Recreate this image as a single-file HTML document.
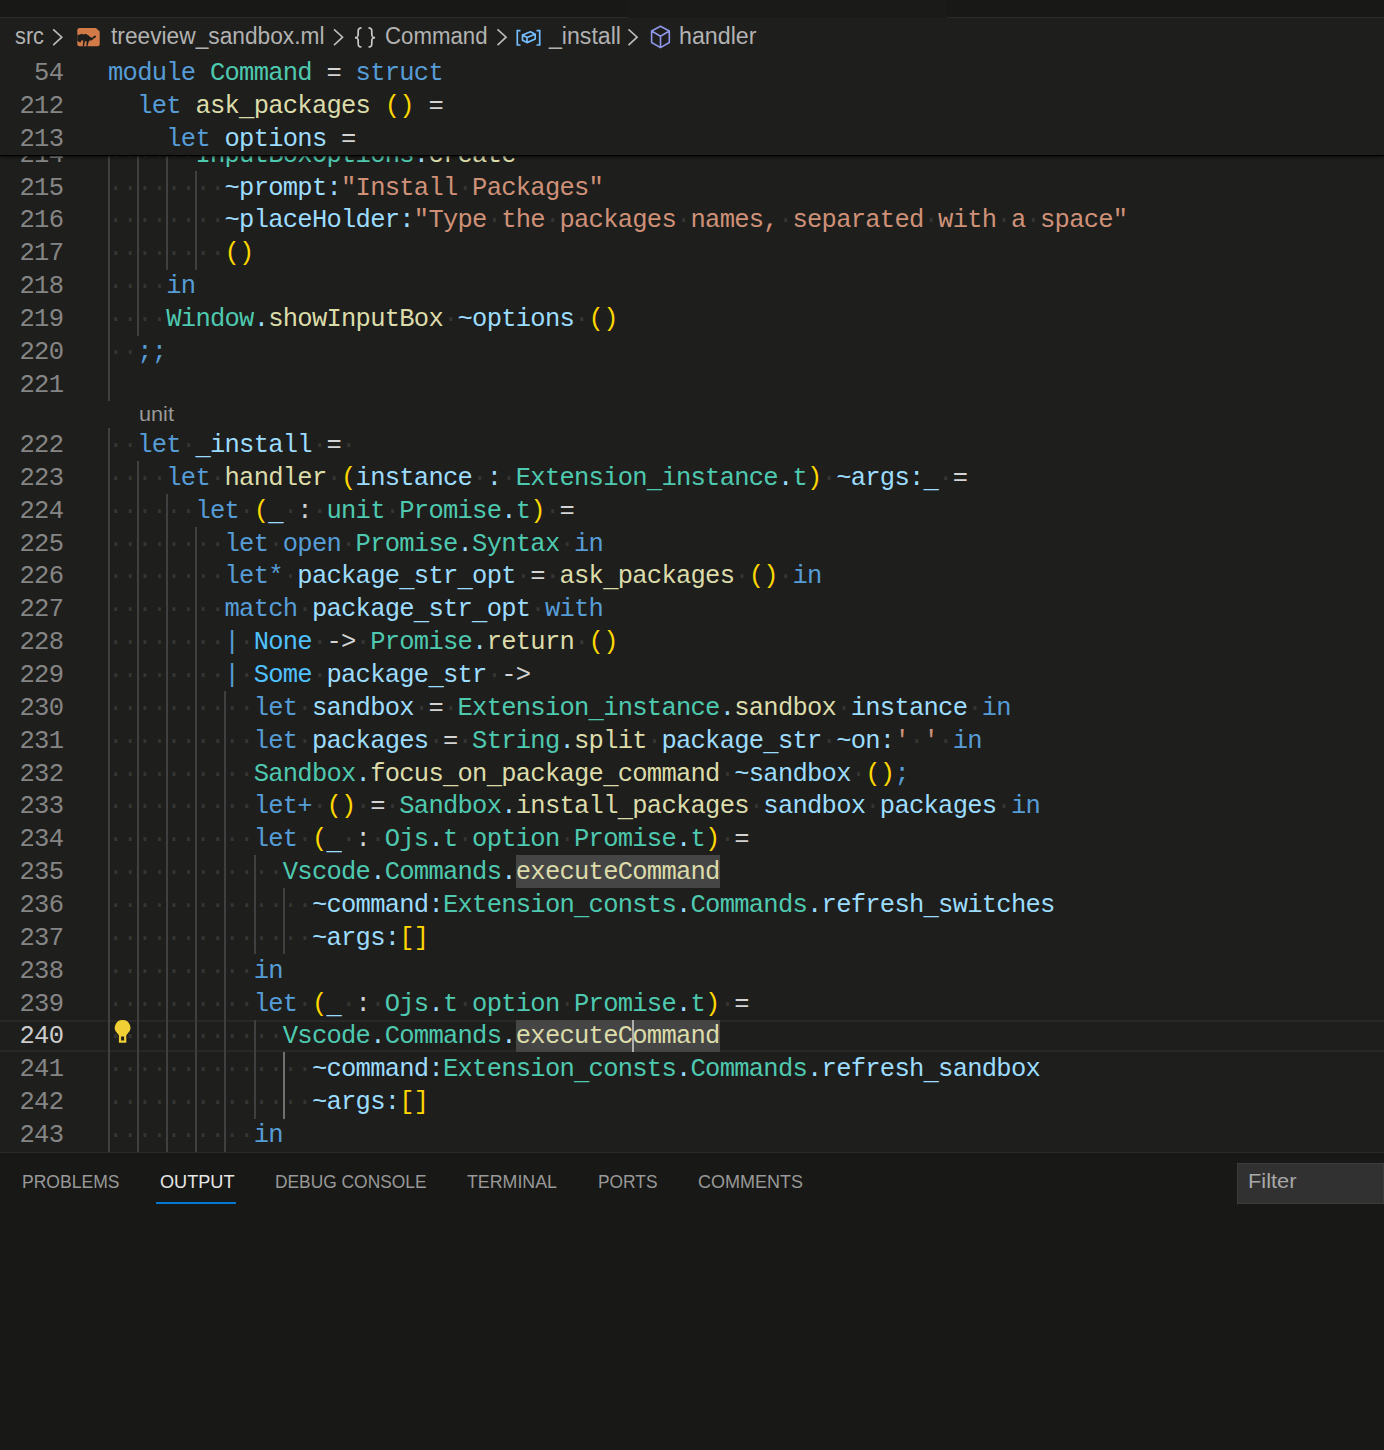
<!DOCTYPE html>
<html><head><meta charset="utf-8"><style>
*{margin:0;padding:0;box-sizing:border-box}
html,body{width:1384px;height:1450px;overflow:hidden;background:#181816}
body{position:relative;font-family:"Liberation Mono",monospace}
#tabs{position:absolute;left:0;top:0;width:1384px;height:17px;background:#181816}
#tabs:after{content:"";position:absolute;left:0;top:17px;width:1384px;height:1px;background:#2b2b2b}
#editor{position:absolute;left:0;top:18px;width:1384px;height:1134px;background:#1e1e1c;overflow:hidden}
#crumbs{position:absolute;left:0;top:18px;width:1384px;height:39px;font-family:"Liberation Sans",sans-serif;font-size:23.5px;color:#a9a9a9}
#crumbs span{position:absolute;top:-1.5px;line-height:39px;white-space:pre;color:#b2b2b2}
.line{position:absolute;left:108.0px;margin-top:1.8px;height:32.857px;line-height:32.857px;font-size:25.5px;letter-spacing:-0.74px;white-space:pre;color:#d4d4d4}
.num{position:absolute;left:0;margin-top:1.8px;width:63.2px;text-align:right;height:32.857px;line-height:32.857px;font-size:25.5px;letter-spacing:-0.74px;color:#858585}
.num.act{color:#cccccc}
i{font-style:normal;color:rgba(227,228,226,0.12)}
.k{color:#569cd6} .v{color:#9cdcfe} .f{color:#dcdcaa} .m{color:#4ec9b0} .s{color:#ce9178} .o{color:#d4d4d4} .b{color:#ffd700} .c{color:#4fc1ff} .d{color:#9cdcfe} u{text-decoration:none;position:relative;top:2.5px}
#sticky .line,#sticky .num{margin-top:0.8px}
.g{position:absolute;width:2px;height:33.357px;background:#404040}
.g.ga{background:#707070}
#sticky{position:absolute;left:0;top:57px;width:1384px;height:98.4px;background:#1e1e1c;box-shadow:0 1px 0 #000,0 2px 3px rgba(0,0,0,0.7)}
#panel{position:absolute;left:0;top:1152px;width:1384px;height:298px;background:#181816;border-top:1px solid #2b2b2b;font-family:"Liberation Sans",sans-serif}
.pt{position:absolute;top:17.5px;font-size:18.6px;line-height:22px;color:#999999}
.pt.on{color:#e7e7e7}
</style></head><body>
<div id="tabs"></div><div style="position:absolute;left:628px;top:0;width:319px;height:18px;background:#1a1a18"></div>
<div id="editor"></div>

<div id="crumbs"><span style="left:14.5px;transform:scaleX(0.9258);transform-origin:0 0;">src</span><span style="left:111.0px;transform:scaleX(0.9672);transform-origin:0 0;">treeview_sandbox.ml</span><span style="left:384.5px;transform:scaleX(0.9455);transform-origin:0 0;">Command</span><span style="left:549.0px;transform:scaleX(0.9842);transform-origin:0 0;">_install</span><span style="left:679.0px;transform:scaleX(0.9886);transform-origin:0 0;">handler</span></div>
<svg style="position:absolute;left:0;top:0" width="1384" height="60" viewBox="0 0 1384 60"><polyline points="53.2,29.3 61.8,37.2 53.2,45.1" fill="none" stroke="#bdbdbd" stroke-width="1.6"/><polyline points="334.0,29.3 342.6,37.2 334.0,45.1" fill="none" stroke="#bdbdbd" stroke-width="1.6"/><polyline points="497.5,29.3 506.1,37.2 497.5,45.1" fill="none" stroke="#bdbdbd" stroke-width="1.6"/><polyline points="628.5,29.3 637.1,37.2 628.5,45.1" fill="none" stroke="#bdbdbd" stroke-width="1.6"/><path d="M361.5,27.8 C357.5,27.8 358.2,31 358.2,34 C358.2,36.5 357.8,37.4 355,37.6 C357.8,37.8 358.2,38.7 358.2,41.2 C358.2,44.2 357.5,47 361.5,47" fill="none" stroke="#cccccc" stroke-width="1.7"/><path d="M368.5,27.8 C372.5,27.8 371.8,31 371.8,34 C371.8,36.5 372.2,37.4 375,37.6 C372.2,37.8 371.8,38.7 371.8,41.2 C371.8,44.2 372.5,47 368.5,47" fill="none" stroke="#cccccc" stroke-width="1.7"/><path d="M79.5,28 H96 L99.7,31.5 V44.2 Q99.7,46.3 97.6,46.3 H79.5 Q77.3,46.3 77.3,44.2 V30.2 Q77.3,28 79.5,28 Z" fill="#d27a48"/><path d="M77.3,35 L80,34.6 L81.5,33.8 L83.5,34.5 L85.5,33.8 L88,35 L90.5,37.3 L92.5,37.8 L93.5,36.3 L95.5,35.6 L96.2,37 L93.8,38.5 L91.5,40.5 L89.5,40.6 L88.6,42 L87.6,46.3 L86.4,46.3 L86.6,41.6 L85,41 L84,46.3 L82.8,46.3 L83.2,40.5 L81.5,40.2 L80.5,42.5 L77.3,41 Z" fill="#1e1e1c"/><path d="M520.5,30.6 H517.3 V45 H520.5 M536.5,30.6 H539.7 V45 H536.5" fill="none" stroke="#75beff" stroke-width="1.7"/><path d="M522.5,35 L530.5,31.8 L535.2,34.2 V39 L527,42.6 L522.5,40.2 Z M522.5,35 L527,37.5 L535.2,34.2 M527,37.5 V42.6" fill="none" stroke="#75beff" stroke-width="1.7" stroke-linejoin="round"/><path d="M660.5,26.2 L669.3,31 V42.5 L660.5,47.6 L651.6,42.5 V31 Z M651.6,31 L660.5,36.2 L669.3,31 M660.5,36.2 V47.6" fill="none" stroke="#8f95e8" stroke-width="1.6" stroke-linejoin="round"/></svg>
<div style="position:absolute;left:0;top:1019.61px;width:1384px;height:32.86px;border-top:2px solid #282828;border-bottom:2px solid #282828"></div>
<div style="position:absolute;left:515.68px;top:855.33px;width:203.84px;height:32.86px;background:#454545"></div>
<div style="position:absolute;left:515.68px;top:1019.61px;width:203.84px;height:32.86px;background:#454545"></div>
<div class="g" style="left:108.00px;top:137.93px"></div>
<div class="g" style="left:137.12px;top:137.93px"></div>
<div class="g" style="left:166.24px;top:137.93px"></div>
<div class="g" style="left:108.00px;top:170.79px"></div>
<div class="g" style="left:137.12px;top:170.79px"></div>
<div class="g" style="left:166.24px;top:170.79px"></div>
<div class="g" style="left:195.36px;top:170.79px"></div>
<div class="g" style="left:108.00px;top:203.64px"></div>
<div class="g" style="left:137.12px;top:203.64px"></div>
<div class="g" style="left:166.24px;top:203.64px"></div>
<div class="g" style="left:195.36px;top:203.64px"></div>
<div class="g" style="left:108.00px;top:236.50px"></div>
<div class="g" style="left:137.12px;top:236.50px"></div>
<div class="g" style="left:166.24px;top:236.50px"></div>
<div class="g" style="left:195.36px;top:236.50px"></div>
<div class="g" style="left:108.00px;top:269.36px"></div>
<div class="g" style="left:137.12px;top:269.36px"></div>
<div class="g" style="left:108.00px;top:302.22px"></div>
<div class="g" style="left:137.12px;top:302.22px"></div>
<div class="g" style="left:108.00px;top:335.07px"></div>
<div class="g" style="left:108.00px;top:367.93px"></div>
<div class="g" style="left:108.00px;top:428.19px"></div>
<div class="g" style="left:108.00px;top:461.04px"></div>
<div class="g" style="left:137.12px;top:461.04px"></div>
<div class="g" style="left:108.00px;top:493.90px"></div>
<div class="g" style="left:137.12px;top:493.90px"></div>
<div class="g" style="left:166.24px;top:493.90px"></div>
<div class="g" style="left:108.00px;top:526.76px"></div>
<div class="g" style="left:137.12px;top:526.76px"></div>
<div class="g" style="left:166.24px;top:526.76px"></div>
<div class="g" style="left:195.36px;top:526.76px"></div>
<div class="g" style="left:108.00px;top:559.61px"></div>
<div class="g" style="left:137.12px;top:559.61px"></div>
<div class="g" style="left:166.24px;top:559.61px"></div>
<div class="g" style="left:195.36px;top:559.61px"></div>
<div class="g" style="left:108.00px;top:592.47px"></div>
<div class="g" style="left:137.12px;top:592.47px"></div>
<div class="g" style="left:166.24px;top:592.47px"></div>
<div class="g" style="left:195.36px;top:592.47px"></div>
<div class="g" style="left:108.00px;top:625.33px"></div>
<div class="g" style="left:137.12px;top:625.33px"></div>
<div class="g" style="left:166.24px;top:625.33px"></div>
<div class="g" style="left:195.36px;top:625.33px"></div>
<div class="g" style="left:108.00px;top:658.18px"></div>
<div class="g" style="left:137.12px;top:658.18px"></div>
<div class="g" style="left:166.24px;top:658.18px"></div>
<div class="g" style="left:195.36px;top:658.18px"></div>
<div class="g" style="left:108.00px;top:691.04px"></div>
<div class="g" style="left:137.12px;top:691.04px"></div>
<div class="g" style="left:166.24px;top:691.04px"></div>
<div class="g" style="left:195.36px;top:691.04px"></div>
<div class="g" style="left:224.48px;top:691.04px"></div>
<div class="g" style="left:108.00px;top:723.90px"></div>
<div class="g" style="left:137.12px;top:723.90px"></div>
<div class="g" style="left:166.24px;top:723.90px"></div>
<div class="g" style="left:195.36px;top:723.90px"></div>
<div class="g" style="left:224.48px;top:723.90px"></div>
<div class="g" style="left:108.00px;top:756.76px"></div>
<div class="g" style="left:137.12px;top:756.76px"></div>
<div class="g" style="left:166.24px;top:756.76px"></div>
<div class="g" style="left:195.36px;top:756.76px"></div>
<div class="g" style="left:224.48px;top:756.76px"></div>
<div class="g" style="left:108.00px;top:789.61px"></div>
<div class="g" style="left:137.12px;top:789.61px"></div>
<div class="g" style="left:166.24px;top:789.61px"></div>
<div class="g" style="left:195.36px;top:789.61px"></div>
<div class="g" style="left:224.48px;top:789.61px"></div>
<div class="g" style="left:108.00px;top:822.47px"></div>
<div class="g" style="left:137.12px;top:822.47px"></div>
<div class="g" style="left:166.24px;top:822.47px"></div>
<div class="g" style="left:195.36px;top:822.47px"></div>
<div class="g" style="left:224.48px;top:822.47px"></div>
<div class="g" style="left:108.00px;top:855.33px"></div>
<div class="g" style="left:137.12px;top:855.33px"></div>
<div class="g" style="left:166.24px;top:855.33px"></div>
<div class="g" style="left:195.36px;top:855.33px"></div>
<div class="g" style="left:224.48px;top:855.33px"></div>
<div class="g" style="left:253.60px;top:855.33px"></div>
<div class="g" style="left:108.00px;top:888.18px"></div>
<div class="g" style="left:137.12px;top:888.18px"></div>
<div class="g" style="left:166.24px;top:888.18px"></div>
<div class="g" style="left:195.36px;top:888.18px"></div>
<div class="g" style="left:224.48px;top:888.18px"></div>
<div class="g" style="left:253.60px;top:888.18px"></div>
<div class="g" style="left:282.72px;top:888.18px"></div>
<div class="g" style="left:108.00px;top:921.04px"></div>
<div class="g" style="left:137.12px;top:921.04px"></div>
<div class="g" style="left:166.24px;top:921.04px"></div>
<div class="g" style="left:195.36px;top:921.04px"></div>
<div class="g" style="left:224.48px;top:921.04px"></div>
<div class="g" style="left:253.60px;top:921.04px"></div>
<div class="g" style="left:282.72px;top:921.04px"></div>
<div class="g" style="left:108.00px;top:953.90px"></div>
<div class="g" style="left:137.12px;top:953.90px"></div>
<div class="g" style="left:166.24px;top:953.90px"></div>
<div class="g" style="left:195.36px;top:953.90px"></div>
<div class="g" style="left:224.48px;top:953.90px"></div>
<div class="g" style="left:108.00px;top:986.75px"></div>
<div class="g" style="left:137.12px;top:986.75px"></div>
<div class="g" style="left:166.24px;top:986.75px"></div>
<div class="g" style="left:195.36px;top:986.75px"></div>
<div class="g" style="left:224.48px;top:986.75px"></div>
<div class="g" style="left:108.00px;top:1019.61px"></div>
<div class="g" style="left:137.12px;top:1019.61px"></div>
<div class="g" style="left:166.24px;top:1019.61px"></div>
<div class="g" style="left:195.36px;top:1019.61px"></div>
<div class="g" style="left:224.48px;top:1019.61px"></div>
<div class="g" style="left:253.60px;top:1019.61px"></div>
<div class="g" style="left:108.00px;top:1052.47px"></div>
<div class="g" style="left:137.12px;top:1052.47px"></div>
<div class="g" style="left:166.24px;top:1052.47px"></div>
<div class="g" style="left:195.36px;top:1052.47px"></div>
<div class="g" style="left:224.48px;top:1052.47px"></div>
<div class="g" style="left:253.60px;top:1052.47px"></div>
<div class="g ga" style="left:282.72px;top:1052.47px"></div>
<div class="g" style="left:108.00px;top:1085.33px"></div>
<div class="g" style="left:137.12px;top:1085.33px"></div>
<div class="g" style="left:166.24px;top:1085.33px"></div>
<div class="g" style="left:195.36px;top:1085.33px"></div>
<div class="g" style="left:224.48px;top:1085.33px"></div>
<div class="g" style="left:253.60px;top:1085.33px"></div>
<div class="g ga" style="left:282.72px;top:1085.33px"></div>
<div class="g" style="left:108.00px;top:1118.18px"></div>
<div class="g" style="left:137.12px;top:1118.18px"></div>
<div class="g" style="left:166.24px;top:1118.18px"></div>
<div class="g" style="left:195.36px;top:1118.18px"></div>
<div class="g" style="left:224.48px;top:1118.18px"></div>
<div class="num" style="top:137.93px">214</div>
<div class="line" style="top:137.93px"><i>······</i><span class="m">InputBoxOptions</span><span class="d">.</span><span class="f">create</span></div>
<div class="num" style="top:170.79px">215</div>
<div class="line" style="top:170.79px"><i>········</i><span class="v">~prompt:</span><span class="s">&quot;Install</span><i>·</i><span class="s">Packages&quot;</span></div>
<div class="num" style="top:203.64px">216</div>
<div class="line" style="top:203.64px"><i>········</i><span class="v">~placeHolder:</span><span class="s">&quot;Type</span><i>·</i><span class="s">the</span><i>·</i><span class="s">packages</span><i>·</i><span class="s">names,</span><i>·</i><span class="s">separated</span><i>·</i><span class="s">with</span><i>·</i><span class="s">a</span><i>·</i><span class="s">space&quot;</span></div>
<div class="num" style="top:236.50px">217</div>
<div class="line" style="top:236.50px"><i>········</i><span class="b">()</span></div>
<div class="num" style="top:269.36px">218</div>
<div class="line" style="top:269.36px"><i>····</i><span class="k">in</span></div>
<div class="num" style="top:302.22px">219</div>
<div class="line" style="top:302.22px"><i>····</i><span class="m">Window</span><span class="d">.</span><span class="f">showInputBox</span><i>·</i><span class="v">~options</span><i>·</i><span class="b">()</span></div>
<div class="num" style="top:335.07px">220</div>
<div class="line" style="top:335.07px"><i>··</i><span class="k">;;</span></div>
<div class="num" style="top:367.93px">221</div>
<div class="line" style="top:367.93px"></div>
<div class="num" style="top:428.19px">222</div>
<div class="line" style="top:428.19px"><i>··</i><span class="k">let</span><i>·</i><span class="v"><u>_</u>install</span><i>·</i><span class="o">=</span><i>·</i></div>
<div class="num" style="top:461.04px">223</div>
<div class="line" style="top:461.04px"><i>····</i><span class="k">let</span><i>·</i><span class="f">handler</span><i>·</i><span class="b">(</span><span class="v">instance</span><i>·</i><span class="v">:</span><i>·</i><span class="m">Extension<u>_</u>instance</span><span class="d">.</span><span class="m">t</span><span class="b">)</span><i>·</i><span class="v">~args:<u>_</u></span><i>·</i><span class="o">=</span></div>
<div class="num" style="top:493.90px">224</div>
<div class="line" style="top:493.90px"><i>······</i><span class="k">let</span><i>·</i><span class="b">(</span><span class="v"><u>_</u></span><i>·</i><span class="o">:</span><i>·</i><span class="m">unit</span><i>·</i><span class="m">Promise</span><span class="d">.</span><span class="m">t</span><span class="b">)</span><i>·</i><span class="o">=</span></div>
<div class="num" style="top:526.76px">225</div>
<div class="line" style="top:526.76px"><i>········</i><span class="k">let</span><i>·</i><span class="k">open</span><i>·</i><span class="m">Promise</span><span class="d">.</span><span class="m">Syntax</span><i>·</i><span class="k">in</span></div>
<div class="num" style="top:559.61px">226</div>
<div class="line" style="top:559.61px"><i>········</i><span class="k">let*</span><i>·</i><span class="v">package<u>_</u>str<u>_</u>opt</span><i>·</i><span class="o">=</span><i>·</i><span class="f">ask<u>_</u>packages</span><i>·</i><span class="b">()</span><i>·</i><span class="k">in</span></div>
<div class="num" style="top:592.47px">227</div>
<div class="line" style="top:592.47px"><i>········</i><span class="k">match</span><i>·</i><span class="v">package<u>_</u>str<u>_</u>opt</span><i>·</i><span class="k">with</span></div>
<div class="num" style="top:625.33px">228</div>
<div class="line" style="top:625.33px"><i>········</i><span class="k">|</span><i>·</i><span class="c">None</span><i>·</i><span class="o">-&gt;</span><i>·</i><span class="m">Promise</span><span class="d">.</span><span class="f">return</span><i>·</i><span class="b">()</span></div>
<div class="num" style="top:658.18px">229</div>
<div class="line" style="top:658.18px"><i>········</i><span class="k">|</span><i>·</i><span class="c">Some</span><i>·</i><span class="v">package<u>_</u>str</span><i>·</i><span class="o">-&gt;</span></div>
<div class="num" style="top:691.04px">230</div>
<div class="line" style="top:691.04px"><i>··········</i><span class="k">let</span><i>·</i><span class="v">sandbox</span><i>·</i><span class="o">=</span><i>·</i><span class="m">Extension<u>_</u>instance</span><span class="d">.</span><span class="f">sandbox</span><i>·</i><span class="v">instance</span><i>·</i><span class="k">in</span></div>
<div class="num" style="top:723.90px">231</div>
<div class="line" style="top:723.90px"><i>··········</i><span class="k">let</span><i>·</i><span class="v">packages</span><i>·</i><span class="o">=</span><i>·</i><span class="m">String</span><span class="d">.</span><span class="f">split</span><i>·</i><span class="v">package<u>_</u>str</span><i>·</i><span class="v">~on:</span><span class="s">&#x27;</span><i>·</i><span class="s">&#x27;</span><i>·</i><span class="k">in</span></div>
<div class="num" style="top:756.76px">232</div>
<div class="line" style="top:756.76px"><i>··········</i><span class="m">Sandbox</span><span class="d">.</span><span class="f">focus<u>_</u>on<u>_</u>package<u>_</u>command</span><i>·</i><span class="v">~sandbox</span><i>·</i><span class="b">()</span><span class="k">;</span></div>
<div class="num" style="top:789.61px">233</div>
<div class="line" style="top:789.61px"><i>··········</i><span class="k">let+</span><i>·</i><span class="b">()</span><i>·</i><span class="o">=</span><i>·</i><span class="m">Sandbox</span><span class="d">.</span><span class="f">install<u>_</u>packages</span><i>·</i><span class="v">sandbox</span><i>·</i><span class="v">packages</span><i>·</i><span class="k">in</span></div>
<div class="num" style="top:822.47px">234</div>
<div class="line" style="top:822.47px"><i>··········</i><span class="k">let</span><i>·</i><span class="b">(</span><span class="v"><u>_</u></span><i>·</i><span class="o">:</span><i>·</i><span class="m">Ojs</span><span class="d">.</span><span class="m">t</span><i>·</i><span class="m">option</span><i>·</i><span class="m">Promise</span><span class="d">.</span><span class="m">t</span><span class="b">)</span><i>·</i><span class="o">=</span></div>
<div class="num" style="top:855.33px">235</div>
<div class="line" style="top:855.33px"><i>············</i><span class="m">Vscode</span><span class="d">.</span><span class="m">Commands</span><span class="d">.</span><span class="f">executeCommand</span></div>
<div class="num" style="top:888.18px">236</div>
<div class="line" style="top:888.18px"><i>··············</i><span class="v">~command:</span><span class="m">Extension<u>_</u>consts</span><span class="d">.</span><span class="m">Commands</span><span class="d">.</span><span class="v">refresh<u>_</u>switches</span></div>
<div class="num" style="top:921.04px">237</div>
<div class="line" style="top:921.04px"><i>··············</i><span class="v">~args:</span><span class="b">[]</span></div>
<div class="num" style="top:953.90px">238</div>
<div class="line" style="top:953.90px"><i>··········</i><span class="k">in</span></div>
<div class="num" style="top:986.75px">239</div>
<div class="line" style="top:986.75px"><i>··········</i><span class="k">let</span><i>·</i><span class="b">(</span><span class="v"><u>_</u></span><i>·</i><span class="o">:</span><i>·</i><span class="m">Ojs</span><span class="d">.</span><span class="m">t</span><i>·</i><span class="m">option</span><i>·</i><span class="m">Promise</span><span class="d">.</span><span class="m">t</span><span class="b">)</span><i>·</i><span class="o">=</span></div>
<div class="num act" style="top:1019.61px">240</div>
<div class="line" style="top:1019.61px"><i>············</i><span class="m">Vscode</span><span class="d">.</span><span class="m">Commands</span><span class="d">.</span><span class="f">executeCommand</span></div>
<div class="num" style="top:1052.47px">241</div>
<div class="line" style="top:1052.47px"><i>··············</i><span class="v">~command:</span><span class="m">Extension<u>_</u>consts</span><span class="d">.</span><span class="m">Commands</span><span class="d">.</span><span class="v">refresh<u>_</u>sandbox</span></div>
<div class="num" style="top:1085.33px">242</div>
<div class="line" style="top:1085.33px"><i>··············</i><span class="v">~args:</span><span class="b">[]</span></div>
<div class="num" style="top:1118.18px">243</div>
<div class="line" style="top:1118.18px"><i>··········</i><span class="k">in</span></div>
<div style="position:absolute;left:139px;top:400.79px;height:27.40px;line-height:27.40px;font-family:'Liberation Sans',sans-serif;font-size:19.5px;color:#999999;transform:scaleX(1.11);transform-origin:0 0">unit</div>
<svg style="position:absolute;left:105px;top:1012px" width="40" height="40" viewBox="105 1012 40 40"><path d="M122.6,1020 A7.6,7.6 0 0 1 128.5,1032.6 L126.3,1035.2 V1042.8 H118.9 V1035.2 L116.7,1032.6 A7.6,7.6 0 0 1 122.6,1020 Z M121.1,1036.4 V1040.6 H124.1 V1036.4 Z" fill="#f0d035" fill-rule="evenodd"/></svg>
<div style="position:absolute;left:631.56px;top:1019.61px;width:2px;height:32.86px;background:#aeafad"></div>
<div id="sticky">
<div class="num" style="top:0.00px">54</div>
<div class="line" style="top:0.00px"><span class="k">module</span> <span class="m">Command</span> <span class="o">=</span> <span class="k">struct</span></div>
<div class="num" style="top:33.00px">212</div>
<div class="line" style="top:33.00px">  <span class="k">let</span> <span class="f">ask<u>_</u>packages</span> <span class="b">()</span> <span class="o">=</span></div>
<div class="num" style="top:66.00px">213</div>
<div class="line" style="top:66.00px">    <span class="k">let</span> <span class="v">options</span> <span class="o">=</span></div>
</div>
<div id="panel"><div class="pt" style="left:21.5px;transform:scaleX(0.9436);transform-origin:0 0">PROBLEMS</div><div class="pt on" style="left:159.5px;transform:scaleX(0.9746);transform-origin:0 0">OUTPUT</div><div style="position:absolute;left:156px;top:48.5px;width:80px;height:2px;background:#0078d4"></div><div class="pt" style="left:274.5px;transform:scaleX(0.9340);transform-origin:0 0">DEBUG CONSOLE</div><div class="pt" style="left:466.5px;transform:scaleX(0.9573);transform-origin:0 0">TERMINAL</div><div class="pt" style="left:598.0px;transform:scaleX(0.9338);transform-origin:0 0">PORTS</div><div class="pt" style="left:698.0px;transform:scaleX(0.9681);transform-origin:0 0">COMMENTS</div><div style="position:absolute;left:1237px;top:10px;width:147px;height:41px;background:#313131;border:1px solid #3c3c3c"></div><div class="pt" style="left:1248px;top:16.5px;font-size:19.5px;color:#a8a8a8;transform:scaleX(1.118);transform-origin:0 0">Filter</div></div>
</body></html>
